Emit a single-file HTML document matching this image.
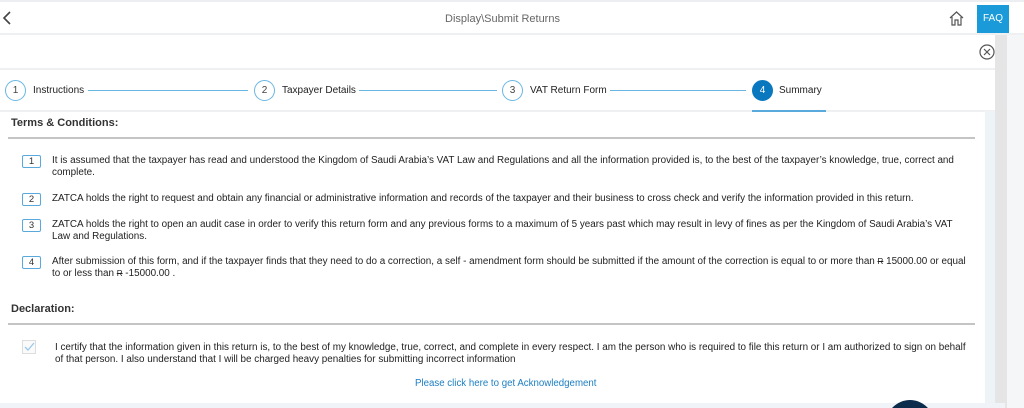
<!DOCTYPE html>
<html><head><meta charset="utf-8">
<style>
*{margin:0;padding:0;box-sizing:border-box}
html,body{width:1024px;height:408px;overflow:hidden}
body{background:#fff;font-family:"Liberation Sans",Arial,sans-serif;position:relative;color:#222}
.abs{position:absolute}
.hdr{left:0;top:0;width:1024px;height:35px;border-top:2px solid #eceef2;border-bottom:2px solid #eef0f2;background:#fff}
.title{left:0;width:1005px;top:13px;text-align:center;font-size:11px;color:#666}
.faq{left:977px;top:5px;width:32px;height:28px;background:#1a9ad8;color:#fff;font-size:10px;text-align:center;line-height:28px}
.rside1{left:985px;top:111px;width:10px;height:297px;background:#eef3f7}
.rside2{left:995px;top:35px;width:12px;height:373px;background:#e5e5e5}
.rside3{left:1007px;top:35px;width:17px;height:373px;background:#f4f6f8}
.step{top:80px;width:21px;height:21px;border:1px solid #6ab6e2;border-radius:50%;font-size:10px;text-align:center;line-height:19px;color:#444;background:#fff}
.slbl{top:85px;font-size:10px;color:#222}
.line{top:90px;height:1px;background:#6ab6e2}
.sep{left:0;width:995px;height:2px;background:#eef0f2}
h3{position:absolute;font-size:11px;font-weight:bold;color:#333}
.hr{left:8px;width:967px;height:2px;background:#c4c4c4}
.num{left:22px;width:19px;height:13px;border:1px solid #5aa9dc;border-radius:2px;font-size:9.5px;text-align:center;line-height:11px;color:#333}
.txt{left:52px;width:908px;font-size:9.9px;line-height:12px;color:#222}
.cur{text-decoration:line-through;font-size:8px}
</style></head><body>
<div class="abs hdr"></div>
<svg class="abs" style="left:2px;top:11px" width="10" height="14"><path d="M8 1 L2 7 L8 13" stroke="#444" stroke-width="1.6" fill="none"/></svg>
<div class="abs title">Display\Submit Returns</div>
<svg class="abs" style="left:948px;top:10px" width="17" height="16"><path d="M2 8 L8.5 2 L15 8 M4 7 V15 H7 V10 H10 V15 H13 V7" stroke="#555" stroke-width="1.2" fill="none"/></svg>
<div class="abs faq">FAQ</div>
<div class="abs rside2"></div>
<div class="abs rside3"></div>
<svg class="abs" style="left:979px;top:44px" width="16" height="16"><circle cx="8" cy="8" r="7" stroke="#555" stroke-width="1.2" fill="none"/><path d="M5 5 L11 11 M11 5 L5 11" stroke="#555" stroke-width="1.2"/></svg>
<div class="abs sep" style="top:68px"></div>
<div class="abs step" style="left:5px">1</div><div class="abs slbl" style="left:33px">Instructions</div>
<div class="abs line" style="left:88px;width:160px"></div>
<div class="abs step" style="left:254px">2</div><div class="abs slbl" style="left:282px">Taxpayer Details</div>
<div class="abs line" style="left:359px;width:138px"></div>
<div class="abs step" style="left:502px">3</div><div class="abs slbl" style="left:530px">VAT Return Form</div>
<div class="abs line" style="left:610px;width:136px"></div>
<div class="abs step" style="left:752px;background:#0a78bf;border-color:#0a78bf;color:#fff">4</div><div class="abs slbl" style="left:779px">Summary</div>
<div class="abs" style="left:752px;top:110px;width:74px;height:2px;background:#5aa9dc"></div>
<div class="abs sep" style="top:110px;width:752px"></div>
<div class="abs sep" style="top:110px;left:826px;width:169px"></div>
<div class="abs rside1"></div>
<h3 style="left:11px;top:117px">Terms &amp; Conditions:</h3>
<div class="abs hr" style="top:137px"></div>
<div class="abs num" style="top:155px">1</div>
<div class="abs txt" style="top:155px">It is assumed that the taxpayer has read and understood the Kingdom of Saudi Arabia&#8217;s VAT Law and Regulations and all the information provided is, to the best of the taxpayer&#8217;s knowledge, true, correct and complete.</div>
<div class="abs num" style="top:193px">2</div>
<div class="abs txt" style="top:193px">ZATCA holds the right to request and obtain any financial or administrative information and records of the taxpayer and their business to cross check and verify the information provided in this return.</div>
<div class="abs num" style="top:219px">3</div>
<div class="abs txt" style="top:219px">ZATCA holds the right to open an audit case in order to verify this return form and any previous forms to a maximum of 5 years past which may result in levy of fines as per the Kingdom of Saudi Arabia&#8217;s VAT Law and Regulations.</div>
<div class="abs num" style="top:256px">4</div>
<div class="abs txt" style="top:256px;width:916px">After submission of this form, and if the taxpayer finds that they need to do a correction, a self - amendment form should be submitted if the amount of the correction is equal to or more than <span class="cur">R</span> 15000.00 or equal to or less than <span class="cur">R</span> -15000.00 .</div>
<h3 style="left:11px;top:303px">Declaration:</h3>
<div class="abs hr" style="top:323px"></div>
<div class="abs" style="left:22px;top:340px;width:14px;height:14px;border:1px solid #ddd;background:#fafafa"></div>
<svg class="abs" style="left:24px;top:342px" width="11" height="10"><path d="M1 5 L4 8 L10 1" stroke="#9cc8ea" stroke-width="1.3" fill="none"/></svg>
<div class="abs txt" style="left:55px;top:342px;width:916px">I certify that the information given in this return is, to the best of my knowledge, true, correct, and complete in every respect. I am the person who is required to file this return or I am authorized to sign on behalf of that person. I also understand that I will be charged heavy penalties for submitting incorrect information</div>
<div class="abs" style="left:415px;top:378px;font-size:9.7px;color:#1b7ec2;white-space:nowrap">Please click here to get Acknowledgement</div>
<div class="abs" style="left:0;top:403px;width:1005px;height:5px;background:#f0f4f8"></div>
<svg class="abs" style="left:886px;top:400px" width="48" height="8"><circle cx="24" cy="24" r="24" fill="#0d2b4a"/></svg>
</body></html>
